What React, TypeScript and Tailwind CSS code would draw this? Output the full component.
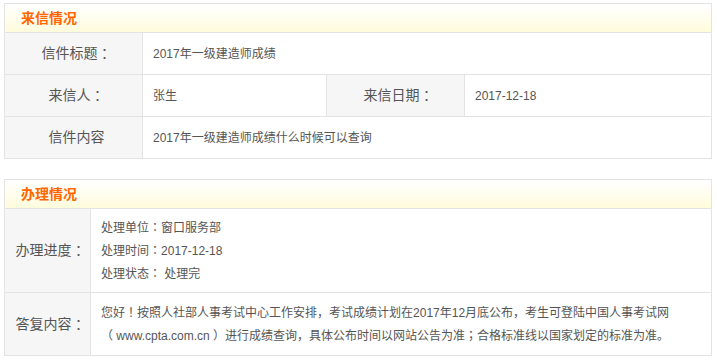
const font = {
  fontFamily: '"Liberation Sans", "Noto Sans CJK SC", sans-serif',
};

// centred full-width punctuation
function P({ c }: { c: string }) {
  return <span style={{ fontFamily: '"Noto Sans CJK TC", sans-serif' }}>{c}</span>;
}

function PanelHeader({ title }: { title: string }) {
  return (
    <div className="h-[28px] flex items-center pl-[16px] bg-gradient-to-b from-white to-[#fffcdc]">
      <span className="text-[14px] font-bold text-[#ff6600] leading-none">{title}</span>
    </div>
  );
}

function Label({ text, colon = true, width }: { text: string; colon?: boolean; width: string }) {
  return (
    <div
      className={`${width} shrink-0 flex items-center justify-center pl-[6px] bg-[#f6f6f6] border-r border-[#e3e3e3] text-[14px] text-[#555]`}
    >
      {text}
      {colon && <P c="：" />}
    </div>
  );
}

export default function App() {
  return (
    <div className="bg-white w-[717px] h-[361px] pt-[3px] pl-[4px]" style={font}>
      {/* 来信情况 */}
      <div className="w-[708px] border border-[#e3e3e3]">
        <PanelHeader title="来信情况" />
        <div className="flex h-[42px] border-t border-[#e3e3e3]">
          <Label text="信件标题" width="w-[138px]" />
          <div className="flex items-center pl-[10px] text-[12px] text-[#555]">2017年一级建造师成绩</div>
        </div>
        <div className="flex h-[42px] border-t border-[#e3e3e3]">
          <Label text="来信人" width="w-[138px]" />
          <div className="w-[184px] shrink-0 flex items-center pl-[10px] border-r border-[#e3e3e3] text-[12px] text-[#555]">
            张生
          </div>
          <Label text="来信日期" width="w-[138px]" />
          <div className="flex items-center pl-[10px] text-[12px] text-[#555]">2017-12-18</div>
        </div>
        <div className="flex h-[42px] border-t border-[#e3e3e3]">
          <Label text="信件内容" colon={false} width="w-[138px]" />
          <div className="flex items-center pl-[10px] text-[12px] text-[#555]">
            2017年一级建造师成绩什么时候可以查询
          </div>
        </div>
      </div>

      {/* 办理情况 */}
      <div className="w-[708px] mt-[20px] border border-[#e3e3e3]">
        <PanelHeader title="办理情况" />
        <div className="flex h-[84px] border-t border-[#e3e3e3]">
          <Label text="办理进度" width="w-[86px]" />
          <div className="flex flex-col justify-center pl-[10px] text-[12px] leading-[21px] text-[#555]">
            <p>
              处理单位<P c="：" />窗口服务部
            </p>
            <p>
              处理时间<P c="：" />2017-12-18
            </p>
            <p>
              处理状态<P c="：" /> 处理完
            </p>
          </div>
        </div>
        <div className="flex h-[63px] border-t border-[#e3e3e3]">
          <Label text="答复内容" width="w-[86px]" />
          <div className="flex flex-col justify-center pl-[10px] text-[12px] leading-[21px] text-[#555] whitespace-nowrap">
            <p>
              您好<P c="！" />按照人社部人事考试中心工作安排，考试成绩计划在2017年12月底公布，考生可登陆中国人事考试网
            </p>
            <p>
              （ www.cpta.com.cn ）进行成绩查询，具体公布时间以网站公告为准<P c="；" />合格标准线以国家划定的标准为准。
            </p>
          </div>
        </div>
      </div>
    </div>
  );
}
